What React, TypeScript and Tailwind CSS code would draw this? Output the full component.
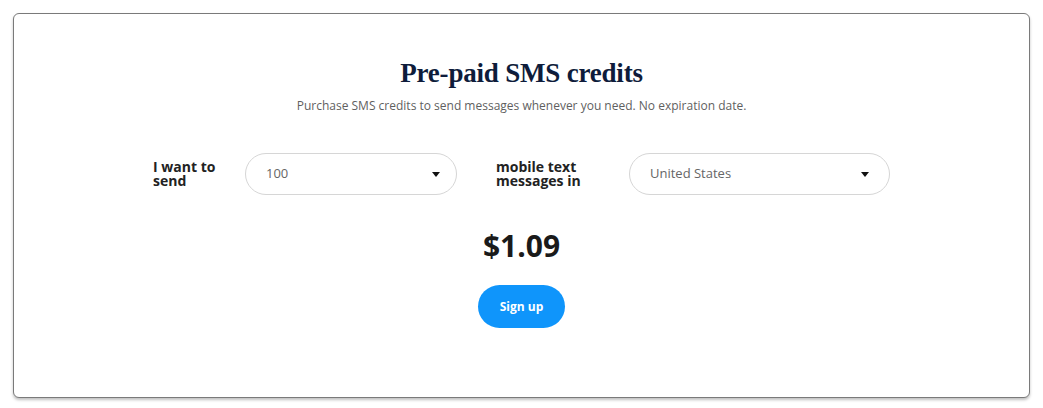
export default function App() {
  const caret = (
    <svg width="8" height="5" viewBox="0 0 8 5" className="shrink-0">
      <path d="M0 0h8L4 5z" fill="#111" />
    </svg>
  )

  return (
    <div className="w-[1043px] h-[408px] bg-white p-[13px] pr-[13px] pb-[10px] font-['Open_Sans',sans-serif]">
      <div className="w-[1017px] h-[385px] rounded-[6px] border border-[#7a7a7a] bg-white shadow-[0_2px_3px_rgba(0,0,0,0.25)] flex flex-col items-center">
        <h1 className="mt-[41px] text-[27px] leading-[36px] font-bold text-[#0e1c3b] font-['Liberation_Serif',serif] tracking-[-0.2px]">
          Pre-paid SMS credits
        </h1>
        <p className="mt-[6px] text-[12px] leading-[18px] text-[#5f5f5f]">
          Purchase SMS credits to send messages whenever you need. No expiration date.
        </p>

        <div className="mt-[38px] flex items-center">
          <div className="w-[92px] text-[14px] leading-[14px] font-bold text-[#222]">
            I want to<br />send
          </div>
          <div className="w-[212px] h-[42px] rounded-full border border-[#d6d6d6] flex items-center justify-between pl-[20px] pr-[16px] text-[13px] text-[#666]">
            <span>100</span>
            {caret}
          </div>
          <div className="ml-[39px] w-[133px] text-[14px] leading-[14px] font-bold text-[#222]">
            mobile text<br />messages in
          </div>
          <div className="w-[261px] h-[42px] rounded-full border border-[#d6d6d6] flex items-center justify-between pl-[20px] pr-[20px] text-[13px] text-[#666]">
            <span>United States</span>
            {caret}
          </div>
        </div>

        <div className="mt-[32px] text-[30px] leading-[38px] font-bold text-[#1a1a1a]">
          $1.09
        </div>

        <button className="mt-[20px] w-[87px] h-[43px] rounded-full bg-[#0f95fb] text-white text-[12px] font-bold">
          Sign up
        </button>
      </div>
    </div>
  )
}
